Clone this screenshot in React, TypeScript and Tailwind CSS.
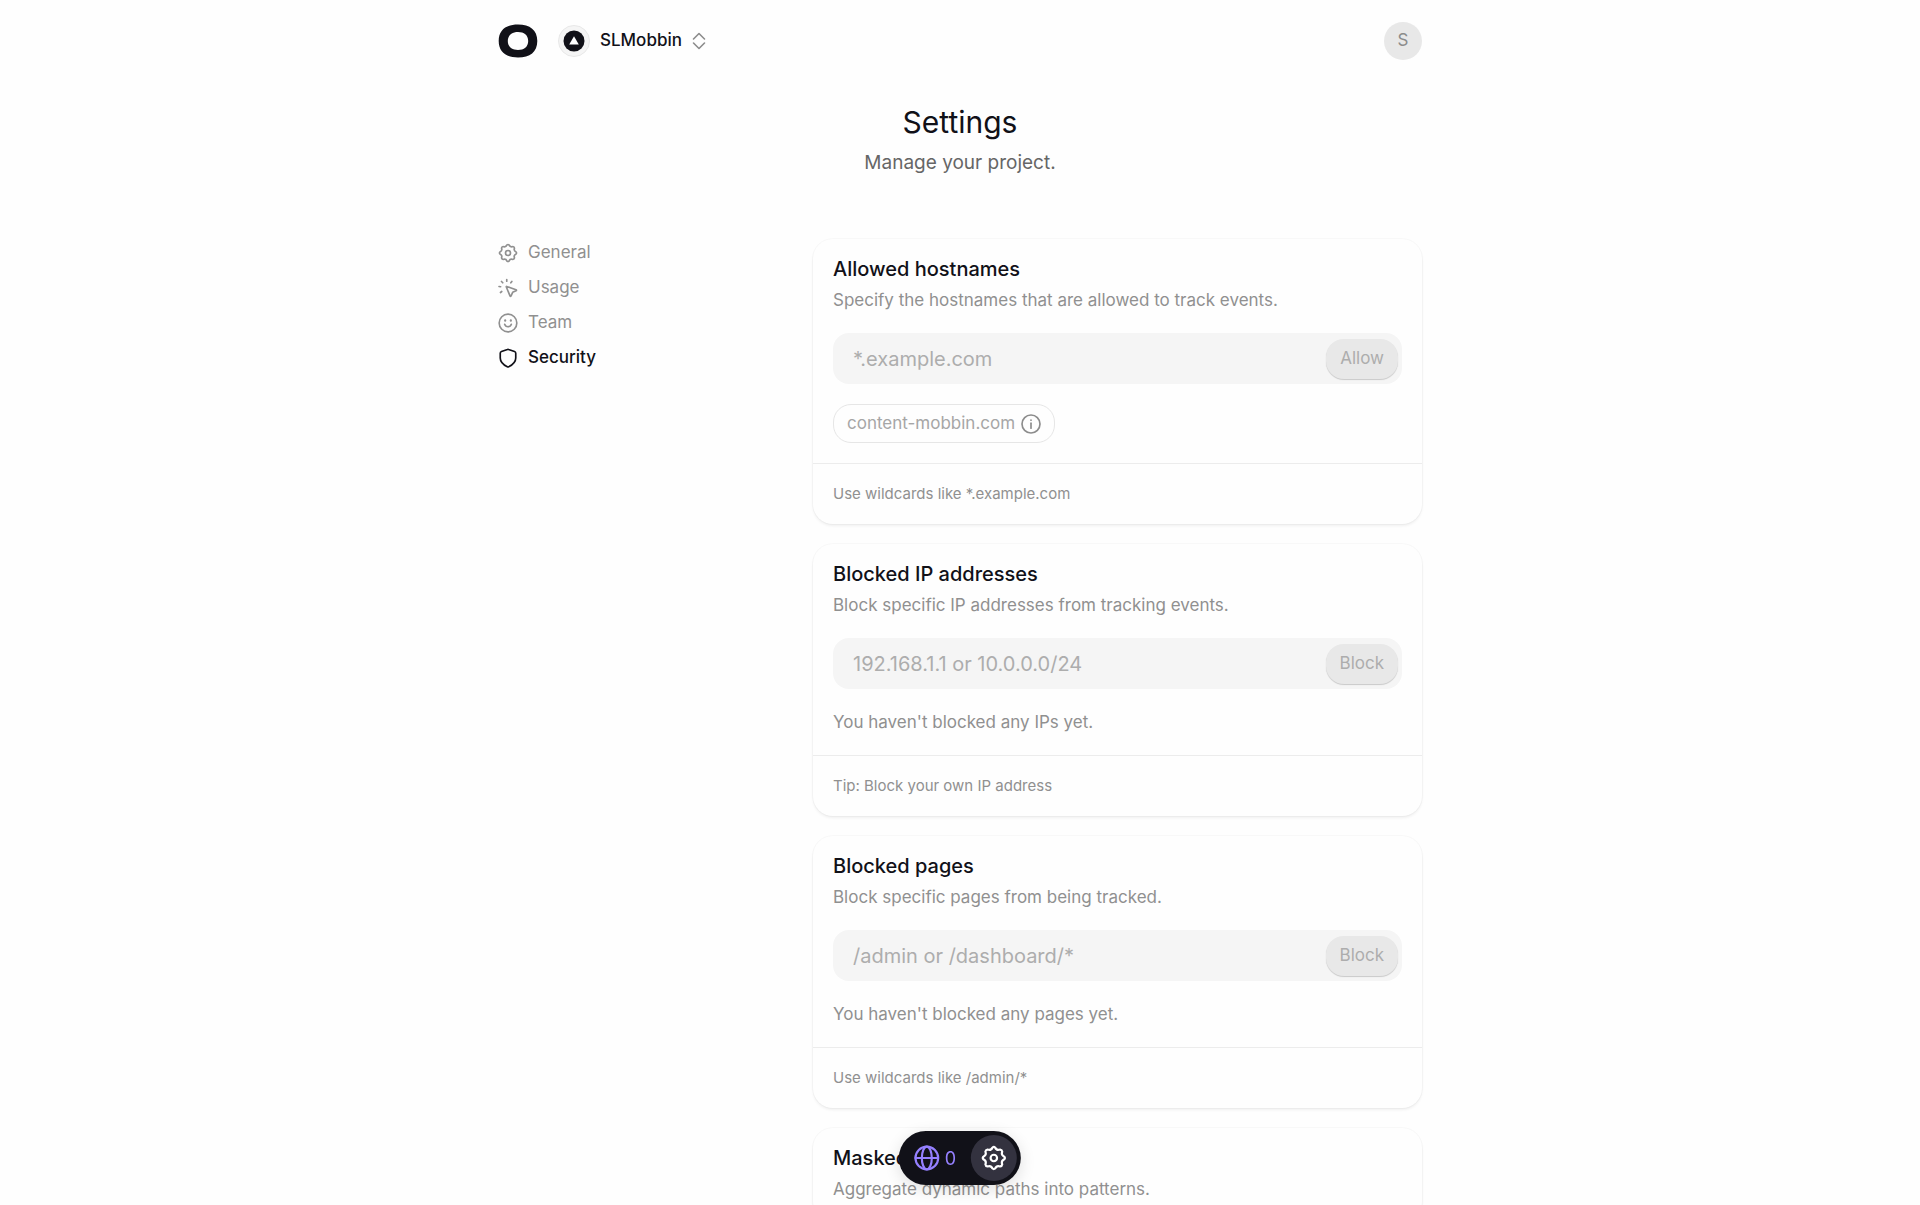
import type { ReactNode } from "react";

const PlainIcon = ({ className, children }: { className: string; children: ReactNode }) => (
  <svg
    viewBox="0 0 24 24"
    fill="none"
    stroke="currentColor"
    strokeWidth="2"
    strokeLinecap="round"
    strokeLinejoin="round"
    aria-hidden="true"
    className={className}
  >
    {children}
  </svg>
);

const GearIcon = ({ className }: { className: string }) => (
  <PlainIcon className={className}>
    <path d="M13.2 2.3Q14.6 5.5 17.87 4.23Q19.55 4.45 19.77 6.13Q18.5 9.4 21.7 10.8Q22.7 12 21.7 13.2Q18.5 14.6 19.77 17.87Q19.55 19.55 17.87 19.77Q14.6 18.5 13.2 21.7Q12 22.7 10.8 21.7Q9.4 18.5 6.13 19.77Q4.45 19.55 4.23 17.87Q5.5 14.6 2.3 13.2Q1.3 12 2.3 10.8Q5.5 9.4 4.23 6.13Q4.45 4.45 6.13 4.23Q9.4 5.5 10.8 2.3Q12 1.3 13.2 2.3Z" />
    <circle cx="12" cy="12" r="3" />
  </PlainIcon>
);

const UsageIcon = ({ className }: { className: string }) => (
  <PlainIcon className={className}>
    <path d="M10.4 10.2 21.6 14Q22.8 14.6 21.6 15.3L17.6 17.2 15.7 21.4Q15 22.6 14.4 21.4L10 10.8Q9.8 10 10.4 10.2Z" />
    <path d="M10.5 1.8v2M16.6 4.2l-1.2 1.6M4.2 4.2l1.5 1.5M1.2 10.2l2 .3M3 17.4l1.5-1.2" />
  </PlainIcon>
);

const TeamIcon = ({ className }: { className: string }) => (
  <PlainIcon className={className}>
    <circle cx="12" cy="12" r="10.6" />
    <path d="M8 13.6a4.2 4.2 0 0 0 8 0" />
    <path d="M8.6 8.8v.4M15.4 8.8v.4" strokeWidth="2.6" />
  </PlainIcon>
);

const ShieldIcon = ({ className }: { className: string }) => (
  <PlainIcon className={className}>
    <path d="M11.3 1.7Q12 1.4 12.7 1.7L19.8 4.2Q21.3 4.7 21.3 6.2V12C21.3 17.4 17.2 20.4 12.8 22.6Q12 23 11.2 22.6C6.8 20.4 2.7 17.4 2.7 12V6.2Q2.7 4.7 4.2 4.2Z" />
  </PlainIcon>
);

const navItems = [
  { label: "General", Icon: GearIcon },
  { label: "Usage", Icon: UsageIcon },
  { label: "Team", Icon: TeamIcon },
  { label: "Security", Icon: ShieldIcon, active: true },
];

function CardHeading({ title, description }: { title: ReactNode; description: string }) {
  return (
    <>
      <h2 className="text-[20px] leading-7 font-medium text-[#111118]">{title}</h2>
      <p className="mt-1 text-[17px] leading-[26px] text-[#909090]">{description}</p>
    </>
  );
}

const cardClass =
  "rounded-[20px] bg-[#fefefe] shadow-[0_0_0_1px_rgba(0,0,0,0.025),0_2px_3px_rgba(0,0,0,0.06)]";

function SettingsCard({
  id,
  title,
  description,
  placeholder,
  action,
  hint,
  children,
}: {
  id: string;
  title: string;
  description: string;
  placeholder: string;
  action: string;
  hint: string;
  children: ReactNode;
}) {
  return (
    <section className={cardClass}>
      <div className="px-5 pt-4 pb-5">
        <CardHeading title={<label htmlFor={id}>{title}</label>} description={description} />
        <form className="mt-5 mb-5 flex h-[51px] items-center rounded-[16px] bg-[#f5f5f5] pr-1">
          <input
            id={id}
            type="text"
            placeholder={placeholder}
            className="h-full min-w-0 flex-1 bg-transparent pl-5 text-[20px] text-[#111118] outline-none placeholder:text-[#adadad]"
          />
          <button
            type="button"
            disabled
            className="h-10 rounded-[18px] bg-[#e8e8e8] px-[14px] text-[17px] text-[#adadad] shadow-[0_1px_1px_rgba(0,0,0,0.18)]"
          >
            {action}
          </button>
        </form>
        {children}
      </div>
      <p className="border-t border-[#ececec] px-5 py-[18px] text-[15px] leading-6 text-[#909090]">{hint}</p>
    </section>
  );
}

export default function App() {
  return (
    <div className="h-screen overflow-y-auto bg-[#fefefe] font-['Inter',sans-serif] text-[#111118] [scrollbar-width:none]">
      <div className="mx-auto w-full max-w-[924px]">
        <header className="flex h-[82px] items-center">
          <a href="#" aria-label="Home">
            <svg viewBox="0 0 40 34" className="h-[34px] w-10" aria-hidden="true">
              <path
                fill="#111118"
                fillRule="evenodd"
                d="M20 .5C32 .5 39.3 6 39.3 17S32 33.5 20 33.5 .7 28 .7 17 8 .5 20 .5ZM20 8C14 8 9.8 11.2 9.8 17S14 26 20 26 30.2 22.8 30.2 17 26 8 20 8Z"
              />
            </svg>
          </a>
          <button type="button" className="ml-5 flex items-center">
            <span className="flex size-8 items-center justify-center rounded-full border border-[#e8e8e8] bg-[#f5f5f5]">
              <svg viewBox="0 0 22 22" className="size-[22px]" aria-hidden="true">
                <circle cx="11" cy="11" r="10.5" fill="#111118" />
                <path d="M11 6.2 15.8 14.5H6.2Z" fill="#fff" />
              </svg>
            </span>
            <span className="ml-[10px] text-[17px] font-medium">SLMobbin</span>
            <svg
              viewBox="0 0 14 18"
              fill="none"
              stroke="#8c8c8c"
              strokeWidth="1.6"
              strokeLinecap="round"
              strokeLinejoin="round"
              className="ml-[10px] h-[18px] w-[14px]"
              aria-hidden="true"
            >
              <path d="M1.5 7 7 1.5 12.5 7M1.5 11 7 16.5 12.5 11" />
            </svg>
          </button>
          <button
            type="button"
            className="ml-auto size-[38px] rounded-full bg-[#e8e8e8] text-[17px] text-[#8c8c8c]"
          >
            S
          </button>
        </header>

        <div className="pt-5 text-center">
          <h1 className="text-[30px] leading-10">Settings</h1>
          <p className="mt-[5px] text-[19px] leading-8 text-[#666666]">Manage your project.</p>
        </div>

        <div className="mt-[60px] flex items-start">
          <nav className="w-[315px] shrink-0">
            <ul className="flex flex-col gap-[7px]">
              {navItems.map(({ label, Icon, active }) => (
                <li key={label}>
                  <a
                    href="#"
                    className={
                      active
                        ? "flex h-7 items-center gap-[10px] text-[17px] font-medium text-[#111118]"
                        : "flex h-7 items-center gap-[10px] text-[17px] text-[#909090]"
                    }
                  >
                    <Icon className="size-5" />
                    {label}
                  </a>
                </li>
              ))}
            </ul>
          </nav>

          <main className="flex min-w-0 flex-1 flex-col gap-5">
            <SettingsCard
              id="hostnames"
              title="Allowed hostnames"
              description="Specify the hostnames that are allowed to track events."
              placeholder="*.example.com"
              action="Allow"
              hint="Use wildcards like *.example.com"
            >
              <span className="flex h-[39px] w-fit items-center gap-[6px] rounded-[18px] border border-[#e6e6e6] px-[13px] text-[17px] text-[#a6a6a6]">
                content-mobbin.com
                <PlainIcon className="size-5 text-[#8c8c8c]">
                  <circle cx="12" cy="12" r="10.8" />
                  <path d="M12 11v6" />
                  <path d="M12 7.2v.2" />
                </PlainIcon>
              </span>
            </SettingsCard>

            <SettingsCard
              id="ips"
              title="Blocked IP addresses"
              description="Block specific IP addresses from tracking events."
              placeholder="192.168.1.1 or 10.0.0.0/24"
              action="Block"
              hint="Tip: Block your own IP address"
            >
              <p className="text-[17px] leading-[26px] text-[#909090]">You haven't blocked any IPs yet.</p>
            </SettingsCard>

            <SettingsCard
              id="pages"
              title="Blocked pages"
              description="Block specific pages from being tracked."
              placeholder="/admin or /dashboard/*"
              action="Block"
              hint="Use wildcards like /admin/*"
            >
              <p className="text-[17px] leading-[26px] text-[#909090]">You haven't blocked any pages yet.</p>
            </SettingsCard>

            <section className={`${cardClass} px-5 pt-4 pb-5`}>
              <CardHeading title="Masked paths" description="Aggregate dynamic paths into patterns." />
            </section>
          </main>
        </div>
      </div>

      <div className="fixed bottom-5 left-1/2 flex h-[54px] -translate-x-1/2 items-center rounded-full bg-[#111118] pr-1 pl-[15px] shadow-[0_4px_16px_rgba(0,0,0,0.12)]">
        <button type="button" className="flex items-center gap-[5px] text-[18px] text-[#9580ff]">
          <PlainIcon className="size-[26px]">
            <circle cx="12" cy="12" r="10.5" />
            <ellipse cx="12" cy="12" rx="4.6" ry="10.5" />
            <path d="M1.5 12h21" />
          </PlainIcon>
          0
        </button>
        <button
          type="button"
          aria-label="Settings"
          className="ml-[15px] flex size-[46px] items-center justify-center rounded-full bg-[#33323f] text-white"
        >
          <GearIcon className="size-[26px]" />
        </button>
      </div>
    </div>
  );
}
